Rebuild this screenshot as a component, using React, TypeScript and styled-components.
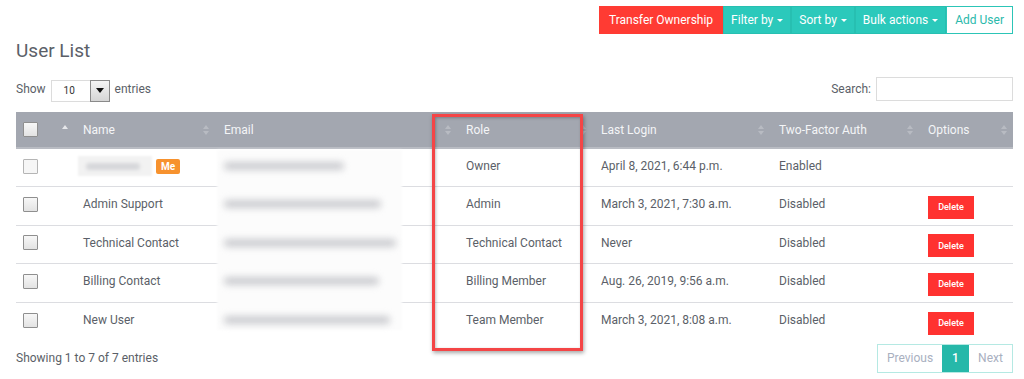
import React from "react";
import styled, { createGlobalStyle } from "styled-components";

const Global = createGlobalStyle`
  html, body { margin: 0; padding: 0; background: #fff; }
  body { font-family: Roboto, "Liberation Sans", Arial, sans-serif; color: #5b5f68; }
  * { box-sizing: border-box; }
`;

const Page = styled.div`
  width: 1024px;
  height: 379px;
  padding: 6px 11px 0 16px;
  overflow: hidden;
`;

const TopBar = styled.div`
  display: flex;
  justify-content: flex-end;
  height: 28px;
`;

const BarButton = styled.button<{ $variant: "red" | "teal" | "white" }>`
  height: 28px;
  padding: 0 ${(p) => (p.$variant === "white" ? "8px" : p.$variant === "red" ? "9px" : "7px")};
  font-family: Roboto, "Liberation Sans", Arial, sans-serif;
  font-size: 12px;
  border: 1px solid
    ${(p) => (p.$variant === "red" ? "#ff3b33" : p.$variant === "teal" ? "#27bfb1" : "#2cc5b7")};
  background: ${(p) => (p.$variant === "red" ? "#ff3b33" : p.$variant === "teal" ? "#2bc9bb" : "#fff")};
  color: ${(p) => (p.$variant === "white" ? "#2bb9ab" : "#fff")};
  display: flex;
  align-items: center;
  gap: 4px;
  cursor: pointer;
`;

const Caret = styled.span`
  display: inline-block;
  width: 0;
  height: 0;
  border-left: 3px solid transparent;
  border-right: 3px solid transparent;
  border-top: 3px solid #fff;
  margin-top: 1px;
`;

const Title = styled.h1`
  margin: 4px 0 0;
  font-size: 19px;
  font-weight: 400;
  color: #5b5f68;
  line-height: 26px;
`;

const ControlsRow = styled.div`
  display: flex;
  justify-content: space-between;
  align-items: center;
  margin-top: 14px;
  height: 24px;
  font-size: 12px;
`;

const LengthControl = styled.div`
  display: flex;
  align-items: center;
  gap: 5px;
  margin-top: -2px;
`;

const SelectBox = styled.div`
  display: flex;
  height: 22px;
  margin-top: 3px;
`;

const SelectValue = styled.div`
  width: 39px;
  border: 1px solid #dcdcdc;
  border-right: none;
  font-size: 10px;
  color: #333;
  display: flex;
  align-items: center;
  padding-left: 12px;
`;

const SelectArrow = styled.div`
  width: 20px;
  border: 1px solid #8a8a8a;
  background: linear-gradient(#f4f4f4, #d6d6d6);
  display: flex;
  align-items: center;
  justify-content: center;
  &::after {
    content: "";
    border-left: 4px solid transparent;
    border-right: 4px solid transparent;
    border-top: 5px solid #111;
  }
`;

const SearchControl = styled.label`
  display: flex;
  align-items: center;
  gap: 5px;
  margin-top: -2px;
`;

const SearchInput = styled.div`
  width: 137px;
  height: 24px;
  border: 1px solid #dcdcdc;
`;

const TableWrap = styled.div`
  position: relative;
  margin-top: 10px;
  width: 997px;
`;

const Table = styled.table`
  width: 100%;
  border-collapse: collapse;
  table-layout: fixed;
  font-size: 12px;
`;

const Th = styled.th<{ $w: number; $pl?: number }>`
  width: ${(p) => p.$w}px;
  height: 36px;
  background: #a3a7b0;
  color: #f4f5f7;
  font-weight: 400;
  text-align: left;
  padding: 0 0 0 ${(p) => p.$pl ?? 9}px;
  position: relative;
  border-bottom: 2px solid #b9bcc3;
`;

const SortIcon = styled.span<{ $asc?: boolean }>`
  position: absolute;
  right: 5px;
  top: 50%;
  transform: translateY(-50%);
  width: 7px;
  height: 10px;
  &::before, &::after {
    content: "";
    position: absolute;
    left: 0;
    border-left: 3.5px solid transparent;
    border-right: 3.5px solid transparent;
  }
  &::before {
    top: 0;
    border-bottom: 4px solid ${(p) => (p.$asc ? "#e6e7ea" : "#b8bbc2")};
  }
  &::after {
    bottom: 0;
    border-top: 4px solid ${(p) => (p.$asc ? "transparent" : "#b8bbc2")};
  }
`;

const Td = styled.td<{ $pl?: number }>`
  height: 38.5px;
  padding: 0 0 3px ${(p) => p.$pl ?? 9}px;
  border-bottom: 1px solid #dcdde1;
  color: #5b5f68;
  vertical-align: middle;
`;

const LastTd = styled(Td)`
  border-bottom: none;
`;

const Check = styled.span`
  display: inline-block;
  width: 15px;
  height: 15px;
  border: 1px solid #8f8f8f;
  background: linear-gradient(#f7f7f7, #e3e3e3);
  border-radius: 1px;
  margin-left: 7px;
  vertical-align: middle;
`;

const LightCheck = styled(Check)`
  border-color: #b5b5b5;
  background: #f6f6f6;
`;

const NameWrap = styled.span`
  display: inline-flex;
  align-items: center;
  gap: 4px;
  margin-left: -5px;
`;

const Redacted = styled.span`
  display: inline-flex;
  align-items: center;
  background: #f2f2f2;
  width: 74px;
  height: 20px;
  padding: 0 8px;
  filter: blur(1.2px);
  &::after {
    content: "";
    display: block;
    width: 54px;
    height: 7px;
    border-radius: 4px;
    background: #d6d7da;
    filter: blur(1.5px);
  }
`;

const MeBadge = styled.span`
  background: #f7922e;
  color: #fff;
  font-weight: 700;
  font-size: 10px;
  padding: 2px 5px;
  border-radius: 2px;
`;

const Email = styled.span<{ $w: number }>`
  position: relative;
  z-index: 2;
  display: inline-block;
  width: ${(p) => p.$w}px;
  height: 8px;
  background: #cbccd0;
  border-radius: 5px;
  filter: blur(3.5px);
`;

const EmailCover = styled.div`
  position: absolute;
  left: 201px;
  top: 38px;
  width: 185px;
  height: 180px;
  background: #fcfcfc;
  z-index: 1;
  filter: blur(1px);
`;

const DeleteButton = styled.button`
  background: #ff3230;
  color: #fff;
  border: none;
  font-family: Roboto, "Liberation Sans", Arial, sans-serif;
  font-size: 9px;
  font-weight: 500;
  width: 46px;
  height: 23px;
  margin-top: 6px;
  cursor: pointer;
`;

const Highlight = styled.div`
  position: absolute;
  left: 416px;
  top: 2px;
  width: 151px;
  height: 237px;
  border: 3px solid #f44546;
  box-shadow: 1px 2px 4px rgba(0, 0, 0, 0.35), inset 1px 1px 3px rgba(0, 0, 0, 0.25);
  z-index: 3;
  pointer-events: none;
`;

const Footer = styled.div`
  display: flex;
  justify-content: space-between;
  align-items: center;
  margin-top: 3px;
  font-size: 12px;
`;

const Pager = styled.div`
  display: flex;
  height: 29px;
  border: 1px solid #b5e9e3;
`;

const PageItem = styled.span<{ $active?: boolean; $w: number }>`
  width: ${(p) => p.$w}px;
  display: flex;
  align-items: center;
  justify-content: center;
  font-size: 12px;
  background: ${(p) => (p.$active ? "#26b8a9" : "#fff")};
  color: ${(p) => (p.$active ? "#fff" : "#a9b0bf")};
  font-weight: ${(p) => (p.$active ? 500 : 400)};
`;

const rows = [
  { name: null, email: 120, role: "Owner", login: "April 8, 2021, 6:44 p.m.", tfa: "Enabled", del: false },
  { name: "Admin Support", email: 157, role: "Admin", login: "March 3, 2021, 7:30 a.m.", tfa: "Disabled", del: true },
  { name: "Technical Contact", email: 172, role: "Technical Contact", login: "Never", tfa: "Disabled", del: true },
  { name: "Billing Contact", email: 155, role: "Billing Member", login: "Aug. 26, 2019, 9:56 a.m.", tfa: "Disabled", del: true },
  { name: "New User", email: 166, role: "Team Member", login: "March 3, 2021, 8:08 a.m.", tfa: "Disabled", del: true },
];

export default function App() {
  return (
    <Page>
      <Global />
      <TopBar>
        <BarButton $variant="red">Transfer Ownership</BarButton>
        <BarButton $variant="teal">Filter by <Caret /></BarButton>
        <BarButton $variant="teal">Sort by <Caret /></BarButton>
        <BarButton $variant="teal">Bulk actions <Caret /></BarButton>
        <BarButton $variant="white">Add User</BarButton>
      </TopBar>
      <Title>User List</Title>
      <ControlsRow>
        <LengthControl>
          Show
          <SelectBox>
            <SelectValue>10</SelectValue>
            <SelectArrow />
          </SelectBox>
          entries
        </LengthControl>
        <SearchControl>
          Search:
          <SearchInput />
        </SearchControl>
      </ControlsRow>
      <TableWrap>
        <EmailCover />
        <Highlight />
        <Table>
          <thead>
            <tr>
              <Th $w={58} $pl={0}>
                <Check />
                <SortIcon $asc />
              </Th>
              <Th $w={141}>Name<SortIcon /></Th>
              <Th $w={242}>Email<SortIcon /></Th>
              <Th $w={135}>Role<SortIcon /></Th>
              <Th $w={178}>Last Login<SortIcon /></Th>
              <Th $w={149}>Two-Factor Auth<SortIcon /></Th>
              <Th $w={94}>Options<SortIcon /></Th>
            </tr>
          </thead>
          <tbody>
            {rows.map((r, i) => {
              const Cell = i === rows.length - 1 ? LastTd : Td;
              return (
                <tr key={i}>
                  <Cell $pl={0}>{i === 0 ? <LightCheck /> : <Check />}</Cell>
                  <Cell>
                    {r.name ? (
                      r.name
                    ) : (
                      <NameWrap>
                        <Redacted />
                        <MeBadge>Me</MeBadge>
                      </NameWrap>
                    )}
                  </Cell>
                  <Cell><Email $w={r.email} /></Cell>
                  <Cell>{r.role}</Cell>
                  <Cell>{r.login}</Cell>
                  <Cell>{r.tfa}</Cell>
                  <Cell>{r.del && <DeleteButton>Delete</DeleteButton>}</Cell>
                </tr>
              );
            })}
          </tbody>
        </Table>
      </TableWrap>
      <Footer>
        <span>Showing 1 to 7 of 7 entries</span>
        <Pager>
          <PageItem $w={64}>Previous</PageItem>
          <PageItem $w={27} $active>1</PageItem>
          <PageItem $w={43}>Next</PageItem>
        </Pager>
      </Footer>
    </Page>
  );
}
